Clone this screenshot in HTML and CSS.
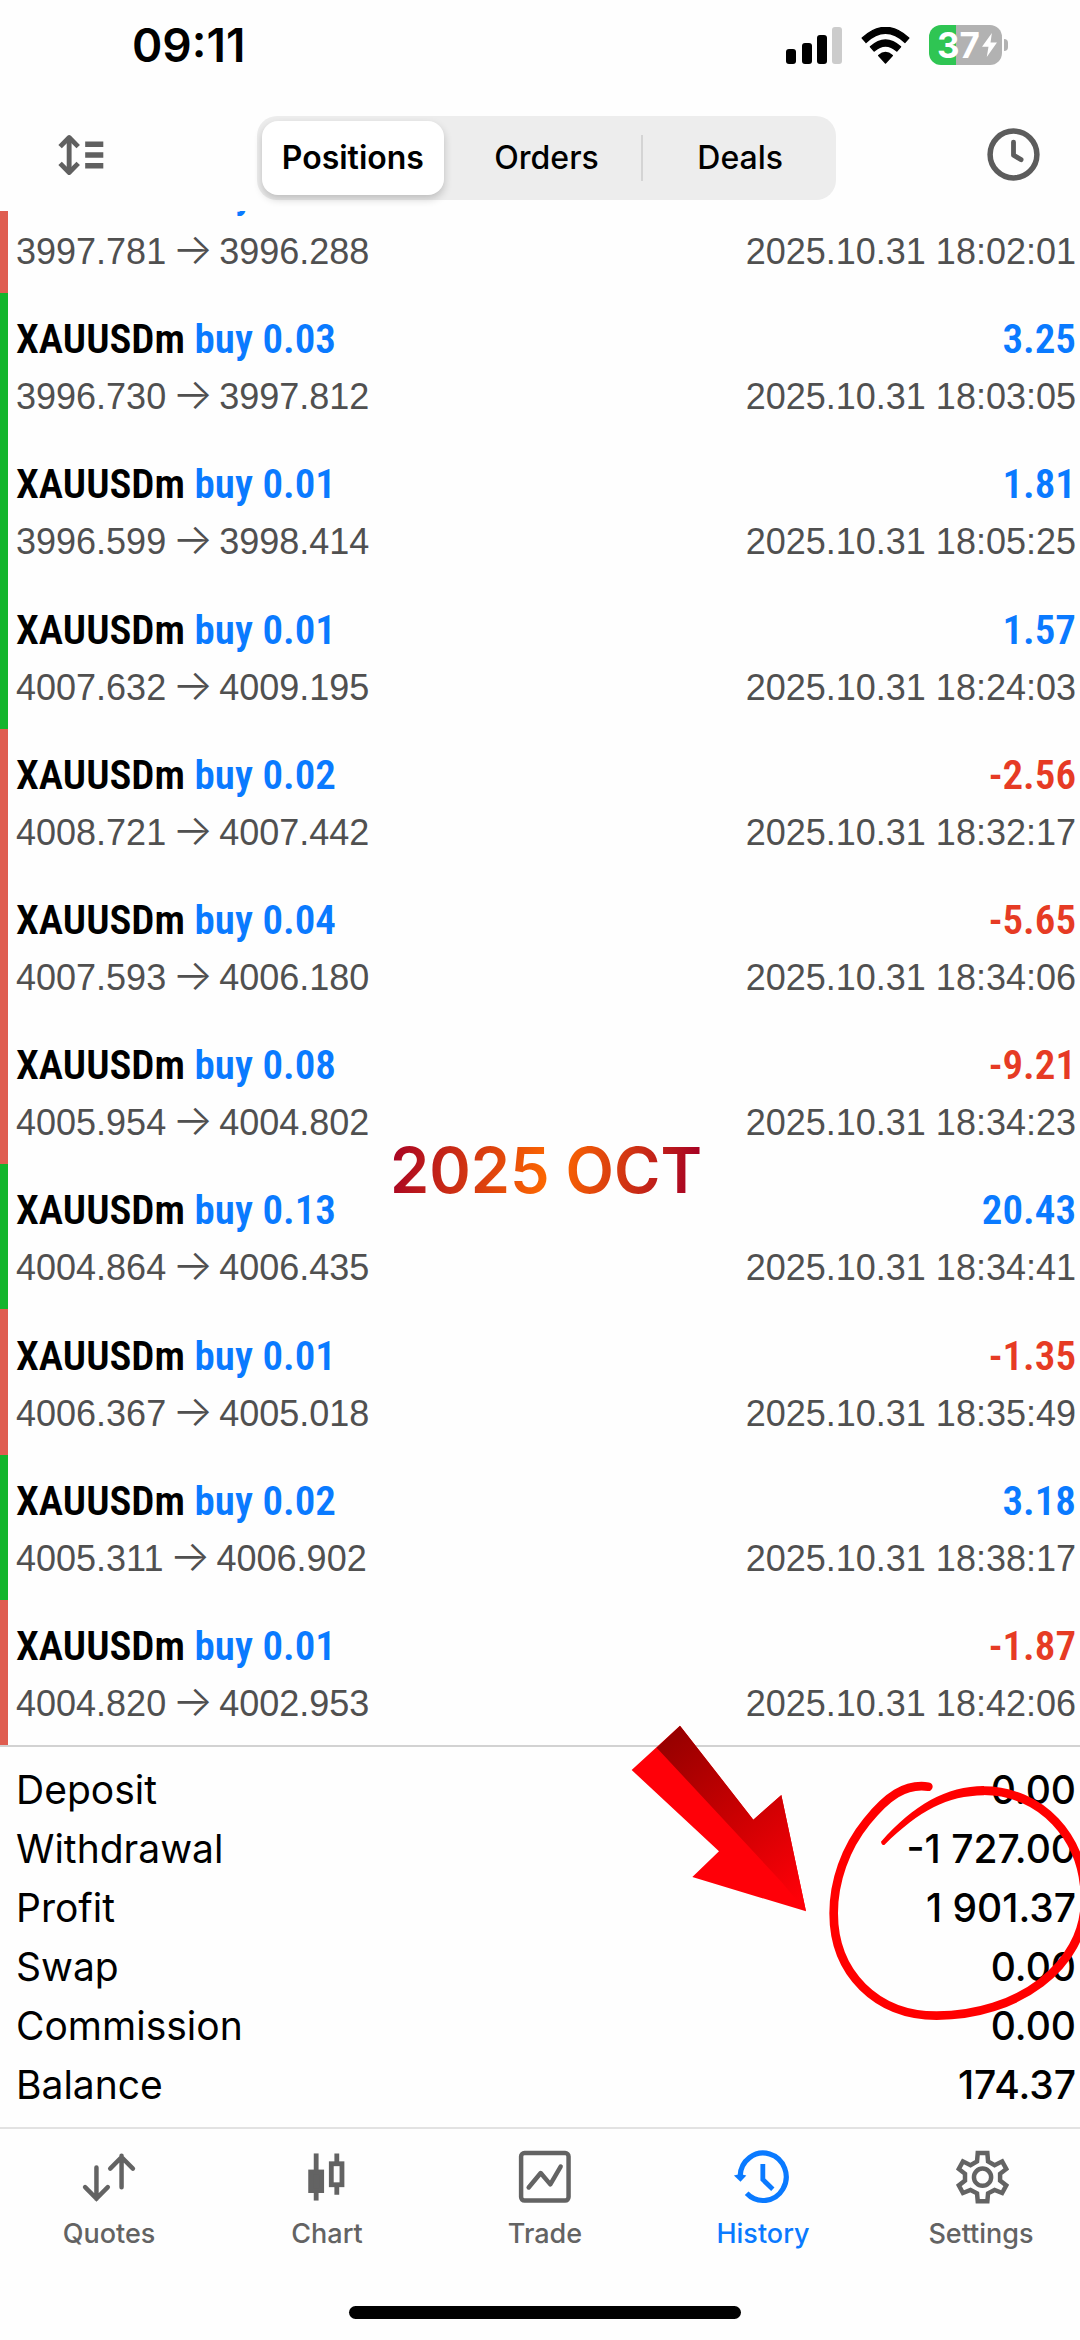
FILE: index.html
```html
<!DOCTYPE html>
<html lang="en">
<head>
  <meta charset="UTF-8">
  <title>History</title>
  <meta name="viewport" content="width=device-width, initial-scale=1.0">
  <link rel="stylesheet" href="styles.css">
</head>
<body>
  <div class="screen">
    <div class="status-bar">
      <span class="time">09:11</span>
      <div class="status-icons">
        <svg class="signal" viewBox="0 0 56 37">
          <rect x="0" y="22" width="10" height="15" rx="3"/>
          <rect x="16" y="16" width="10" height="21" rx="3"/>
          <rect x="31" y="8" width="10" height="29" rx="3"/>
          <rect x="46" y="0" width="10" height="37" rx="3" fill="#ccc"/>
        </svg>
        <svg class="wifi" viewBox="0 0 142 108">
          <path d="M3 32Q71 -30 139 32L128 45Q71 -8 14 45Z" stroke="#000" stroke-width="4" stroke-linejoin="round"/>
          <path d="M27 58Q71 18 115 58L104 70Q71 41 38 70Z" stroke="#000" stroke-width="4" stroke-linejoin="round"/>
          <path d="M51 83Q71 66 91 83L71 105Z" stroke="#000" stroke-width="4" stroke-linejoin="round"/>
        </svg>
        <div class="battery">
          <span class="battery-level">37</span>
          <svg class="bolt" viewBox="0 0 50 74"><path d="M32 2L3 42H22L17 72L47 30H28Z"/></svg>
        </div>
      </div>
    </div>

    <header class="toolbar">
      <button class="icon-button" aria-label="Sort">
        <svg class="sort" viewBox="0 0 132 120" fill="none" stroke="#606060" stroke-width="14">
          <path d="M32 8V112"/>
          <path d="M6 36L32 10L58 36M6 84L32 110L58 84" stroke-linejoin="round"/>
          <path d="M78 29H130M78 60H130M78 91H130" stroke-width="16"/>
        </svg>
      </button>
      <div class="segments" role="tablist">
        <button class="segment active" role="tab" aria-selected="true">Positions</button>
        <button class="segment" role="tab">Orders</button>
        <button class="segment" role="tab">Deals</button>
      </div>
      <button class="icon-button" aria-label="Period">
        <svg class="clock" viewBox="0 0 154 154" fill="none" stroke="#5c5c5c" stroke-width="14">
          <circle cx="77" cy="77" r="68" stroke-width="16"/>
          <path d="M77 41V79L99 92" stroke-linecap="round" stroke-linejoin="round"/>
        </svg>
      </button>
    </header>

    <ul class="deals">
      <li class="deal loss">
        <div class="line"><span class="symbol">XAUUSDm <b>buy 0.01</b></span></div>
        <div class="line details"><span>3997.781 <i>→</i> 3996.288</span><time>2025.10.31 18:02:01</time></div>
      </li>
      <li class="deal">
        <div class="line"><span class="symbol">XAUUSDm <b>buy 0.03</b></span><span class="result">3.25</span></div>
        <div class="line details"><span>3996.730 <i>→</i> 3997.812</span><time>2025.10.31 18:03:05</time></div>
      </li>
      <li class="deal">
        <div class="line"><span class="symbol">XAUUSDm <b>buy 0.01</b></span><span class="result">1.81</span></div>
        <div class="line details"><span>3996.599 <i>→</i> 3998.414</span><time>2025.10.31 18:05:25</time></div>
      </li>
      <li class="deal">
        <div class="line"><span class="symbol">XAUUSDm <b>buy 0.01</b></span><span class="result">1.57</span></div>
        <div class="line details"><span>4007.632 <i>→</i> 4009.195</span><time>2025.10.31 18:24:03</time></div>
      </li>
      <li class="deal loss">
        <div class="line"><span class="symbol">XAUUSDm <b>buy 0.02</b></span><span class="result">-2.56</span></div>
        <div class="line details"><span>4008.721 <i>→</i> 4007.442</span><time>2025.10.31 18:32:17</time></div>
      </li>
      <li class="deal loss">
        <div class="line"><span class="symbol">XAUUSDm <b>buy 0.04</b></span><span class="result">-5.65</span></div>
        <div class="line details"><span>4007.593 <i>→</i> 4006.180</span><time>2025.10.31 18:34:06</time></div>
      </li>
      <li class="deal loss">
        <div class="line"><span class="symbol">XAUUSDm <b>buy 0.08</b></span><span class="result">-9.21</span></div>
        <div class="line details"><span>4005.954 <i>→</i> 4004.802</span><time>2025.10.31 18:34:23</time></div>
      </li>
      <li class="deal">
        <div class="line"><span class="symbol">XAUUSDm <b>buy 0.13</b></span><span class="result">20.43</span></div>
        <div class="line details"><span>4004.864 <i>→</i> 4006.435</span><time>2025.10.31 18:34:41</time></div>
      </li>
      <li class="deal loss">
        <div class="line"><span class="symbol">XAUUSDm <b>buy 0.01</b></span><span class="result">-1.35</span></div>
        <div class="line details"><span>4006.367 <i>→</i> 4005.018</span><time>2025.10.31 18:35:49</time></div>
      </li>
      <li class="deal">
        <div class="line"><span class="symbol">XAUUSDm <b>buy 0.02</b></span><span class="result">3.18</span></div>
        <div class="line details"><span>4005.311 <i>→</i> 4006.902</span><time>2025.10.31 18:38:17</time></div>
      </li>
      <li class="deal loss">
        <div class="line"><span class="symbol">XAUUSDm <b>buy 0.01</b></span><span class="result">-1.87</span></div>
        <div class="line details"><span>4004.820 <i>→</i> 4002.953</span><time>2025.10.31 18:42:06</time></div>
      </li>
    </ul>

    <table class="summary">
      <tr><th scope="row">Deposit</th><td>0.00</td></tr>
      <tr><th scope="row">Withdrawal</th><td>-1&nbsp;727.00</td></tr>
      <tr><th scope="row">Profit</th><td>1&nbsp;901.37</td></tr>
      <tr><th scope="row">Swap</th><td>0.00</td></tr>
      <tr><th scope="row">Commission</th><td>0.00</td></tr>
      <tr><th scope="row">Balance</th><td>174.37</td></tr>
    </table>

    <footer class="bottom">
      <nav class="tabs">
        <a class="tab" href="#quotes">
          <svg viewBox="0 0 157 157" stroke-width="13">
            <path d="M42 51V142M9 108L42 141L75 108" stroke-linecap="round"/>
            <path d="M115 108V17M82 54L115 21L148 54" stroke-linecap="round"/>
          </svg>
          Quotes
        </a>
        <a class="tab" href="#chart">
          <svg viewBox="0 0 157 157" stroke-width="14">
            <path d="M47 10V147"/>
            <rect x="31" y="64" width="32" height="54" fill="currentColor"/>
            <path d="M107 10V36M107 106V130"/>
            <rect x="91" y="40" width="31" height="61"/>
          </svg>
          Chart
        </a>
        <a class="tab" href="#trade">
          <svg viewBox="0 0 157 157" stroke-width="13">
            <rect x="9" y="9" width="138" height="138" rx="10"/>
            <path d="M31 109L66 67L94 100L124 48" stroke-linecap="round" stroke-linejoin="round"/>
          </svg>
          Trade
        </a>
        <a class="tab active" href="#history" aria-current="page">
          <svg viewBox="0 0 157 157" stroke-width="15">
            <path d="M12 76A67 69 0 1 1 31 126"/>
            <path d="M-6 74Q12 68 30 74L13 92Z" fill="currentColor" stroke="none"/>
            <path d="M78 41V86L107 114" stroke-width="14"/>
          </svg>
          History
        </a>
        <a class="tab" href="#settings">
          <svg viewBox="0 0 157 157" stroke-width="13">
            <path d="M69 9H97L99 33L118 44L140 33L152 55L134 69V89L152 103L140 125L118 116L99 126L97 149H69L67 126L48 116L26 125L14 103L32 89V69L14 55L26 33L48 44L67 33Z"/>
            <circle cx="83" cy="79" r="25"/>
          </svg>
          Settings
        </a>
      </nav>
      <div class="home-indicator"></div>
    </footer>

    <div class="caption">2025 OCT</div>
    <svg class="marks" viewBox="0 0 1440 960">
      <defs>
        <linearGradient id="shade" x1="200" y1="110" x2="600" y2="600" gradientUnits="userSpaceOnUse">
          <stop offset="0" stop-color="#960000"/>
          <stop offset="0.5" stop-color="#ca0002"/>
          <stop offset="1" stop-color="#ff0008"/>
        </linearGradient>
      </defs>
      <path d="M240 77L460 359L544 285L618 634L277 531L357 454L95 210Z" fill="#ff0008"/>
      <path d="M240 77L460 359L544 285L618 634L544 545L170 143Z" fill="url(#shade)"/>
      <path d="M985 260C915 250 860 290 800 365C735 445 701 545 701 640C701 820 830 947 1010 947C1250 947 1455 800 1455 600C1455 410 1320 272 1150 272" fill="none" stroke="#f00" stroke-width="26" stroke-linecap="round"/>
      <path d="M1152 258C1040 258 940 315 843 425Q845 436 853 435C960 330 1040 288 1152 286Z" fill="#f00"/>
    </svg>
  </div>
</body>
</html>
```
FILE: styles.css
```css
* {
  box-sizing: border-box;
}
body {
  margin: 0;
  background-color: #fefefe;
  color: #000;
  font-family: Inter, "Liberation Sans", sans-serif;
}
button {
  border: none;
  background: none;
  padding: 0;
  font: inherit;
  color: inherit;
}
.screen {
  position: relative;
  display: flex;
  flex-direction: column;
  min-height: 100vh;
  overflow: hidden;
}

/* status bar */
.status-bar {
  display: flex;
  justify-content: space-between;
  align-items: center;
  height: 90px;
  padding: 0 78px 0 132px;
}
.time {
  font-size: 46px;
  font-weight: 600;
}
.status-icons {
  display: flex;
  align-items: center;
  gap: 19px;
}
.signal {
  width: 56px;
  height: 37px;
}
.wifi {
  width: 49px;
  height: 37px;
}
.battery {
  position: relative;
  display: flex;
  align-items: center;
  gap: 1px;
  width: 73px;
  height: 40px;
  padding-left: 8px;
  border-radius: 12px;
  background: linear-gradient(90deg, #2fc553 27px, #b2b2b2 27px);
  color: #fff;
}
.battery::after {
  content: "";
  position: absolute;
  left: 75px;
  width: 4px;
  height: 12px;
  border-radius: 0 4px 4px 0;
  background-color: #b2b2b2;
}
.battery-level {
  font-size: 35px;
  font-weight: 700;
}
.bolt {
  width: 17px;
  height: 26px;
  fill: #fff;
}

/* toolbar */
.toolbar {
  display: flex;
  align-items: center;
  justify-content: space-between;
  height: 121px;
  padding: 8px 40px 0 58px;
}
.icon-button {
  display: flex;
}
.sort {
  width: 46px;
  height: 42px;
}
.clock {
  width: 53px;
  height: 53px;
}
.segments {
  display: grid;
  grid-template-columns: repeat(3, 1fr);
  flex: 1;
  height: 84px;
  margin: 6px 151px 0 153px;
  padding: 5px;
  border-radius: 20px;
  background-color: #ededed;
}
.segment {
  position: relative;
  font-size: 32px;
  font-weight: 500;
}
.segment.active {
  margin-right: 8px;
  border-radius: 16px;
  background-color: #fff;
  box-shadow: 0 4px 8px rgba(0, 0, 0, 0.2);
  font-weight: 600;
}
.segment:last-child {
  padding-left: 8px;
}
.segment:last-child::before {
  content: "";
  position: absolute;
  left: 0;
  top: 14px;
  bottom: 14px;
  width: 2px;
  background-color: #d4d4d4;
}

/* closed positions */
.deals {
  display: grid;
  grid-template-rows: 82px repeat(10, 1fr);
  flex: 1;
  margin: 0;
  padding: 0;
  list-style: none;
}
.deal {
  display: flex;
  flex-direction: column;
  justify-content: flex-end;
  overflow: hidden;
  padding: 0 4px 14px 8px;
  border-left: 8px solid #12b52c;
}
.deal.loss {
  border-left-color: #df5d50;
}
.line {
  display: flex;
  flex-shrink: 0;
  justify-content: space-between;
  height: 61px;
  line-height: 60px;
  font-family: "Roboto Condensed", "Liberation Sans Narrow", sans-serif;
  font-size: 41px;
  font-weight: 600;
}
.symbol b {
  font-weight: 600;
}
.symbol b,
.result {
  color: #0a7aff;
}
.loss .result {
  color: #e63b24;
}
.details {
  height: 54px;
  line-height: 54px;
  font-family: "Liberation Sans", Arial, sans-serif;
  font-size: 36px;
  font-weight: 400;
  color: #505050;
}
.details i {
  margin: 0 -4px;
  font-family: Inter, sans-serif;
  font-size: 43px;
  font-style: normal;
  font-weight: 300;
  line-height: 1;
}

/* totals */
.summary {
  border-collapse: collapse;
  border-top: 2px solid #d2d2d2;
  border-bottom: 2px solid #e2e2e2;
  font-size: 39px;
}
.summary th,
.summary td {
  height: 59px;
  padding: 0 4px 0 16px;
  line-height: 59px;
}
.summary tr:first-child > * {
  height: 72px;
  padding-top: 13px;
}
.summary tr:last-child > * {
  height: 72px;
  padding-bottom: 13px;
}
.summary th {
  text-align: left;
  font-weight: 400;
}
.summary td {
  text-align: right;
  font-weight: 500;
}

/* bottom tabs */
.bottom {
  height: 211px;
  margin-right: -10px;
  padding-top: 21px;
}
.tabs {
  display: grid;
  grid-template-columns: repeat(5, 1fr);
}
.tab {
  display: flex;
  flex-direction: column;
  align-items: center;
  gap: 10px;
  font-size: 27px;
  font-weight: 500;
  line-height: 40px;
  color: #636363;
  text-decoration: none;
}
.tab svg {
  width: 54px;
  height: 54px;
  overflow: visible;
  fill: none;
  stroke: currentColor;
}
.tab.active {
  color: #0a7aff;
}
.home-indicator {
  width: 36%;
  height: 13px;
  margin: 52px auto 0;
  border-radius: 8px;
  background-color: #000;
}

/* marks drawn over the list */
.caption {
  position: absolute;
  top: 1132px;
  left: 390px;
  font-family: Inter, sans-serif;
  font-size: 63px;
  font-weight: 600;
  line-height: 76px;
  background: linear-gradient(100deg, #a50024, #ff6a00 52%, #a50024 97%);
  background-clip: text;
  -webkit-background-clip: text;
  color: transparent;
}
.marks {
  position: absolute;
  top: 1700px;
  right: 0;
  width: 480px;
  height: 320px;
}
```
